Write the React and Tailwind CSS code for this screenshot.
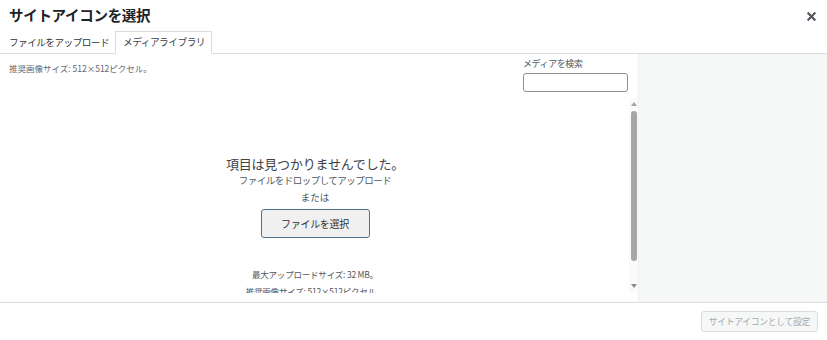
import React from "react";

const font = { fontFamily: '"Noto Sans CJK JP", "Noto Sans", sans-serif' };

function ScrollBar() {
  return (
    <div className="w-[9px] flex flex-col items-center bg-[#fafafa]">
      <div className="h-[6px] mt-[4px] flex items-start justify-center">
        <div className="w-0 h-0 border-l-[3px] border-r-[3px] border-b-[4px] border-l-transparent border-r-transparent border-b-[#a3a3a3]" />
      </div>
      <div className="mt-[3px] w-[6px] h-[150px] rounded-[3px] bg-[#a6a6a6]" />
      <div className="flex-1" />
      <div className="h-[6px] mb-[5px] flex items-end justify-center">
        <div className="w-0 h-0 border-l-[3px] border-r-[3px] border-t-[4px] border-l-transparent border-r-transparent border-t-[#8a8a8a]" />
      </div>
    </div>
  );
}

export default function App() {
  return (
    <div className="w-[827px] h-[340px] bg-white flex flex-col overflow-hidden text-[#3c434a]" style={font}>
      {/* header */}
      <div className="h-[31px] shrink-0 flex items-center justify-between pl-[9px] pr-[11px]">
        <h1 className="text-[14.5px] font-bold text-[#1d2327] leading-none tracking-[-0.3px]">サイトアイコンを選択</h1>
        <svg width="9" height="9" viewBox="0 0 10 10" className="mt-[1px]">
          <path d="M1.5 1.5 L8.5 8.5 M8.5 1.5 L1.5 8.5" stroke="#50575e" strokeWidth="2.4" strokeLinecap="square" />
        </svg>
      </div>
      {/* tabs */}
      <div className="h-[23px] shrink-0 flex items-end border-b border-[#dcdcde] pl-[9px]">
        <div className="h-[22px] flex items-center text-[9.6px] text-[#2c3338] tracking-[-0.5px] pr-[6px]">ファイルをアップロード</div>
        <div className="h-[23px] -mb-px flex items-center pl-[7px] pr-[6px] border border-[#dcdcde] border-b-white bg-white text-[9.7px] text-[#3c434a] tracking-[-0.5px]">メディアライブラリ</div>
      </div>
      {/* main */}
      <div className="flex-1 flex min-h-0">
        <div className="w-[638px] flex flex-col">
          <div className="h-[44px] shrink-0 flex justify-between">
            <div className="pl-[9px] pt-[10px] text-[8.5px] text-[#646970] leading-none">推奨画像サイズ: 512×512ピクセル。</div>
            <div className="pr-[10px] pt-[5px] flex flex-col">
              <label className="text-[9px] text-[#50575e] leading-none mb-[5px] tracking-[-0.4px]">メディアを検索</label>
              <div className="w-[105px] h-[19px] border border-[#8c8f94] rounded-[3px] bg-white" />
            </div>
          </div>
          <div className="flex-1 flex min-h-0">
            <div className="flex-1 flex flex-col items-center overflow-hidden pl-[1px]">
              <div className="shrink-0 mt-[58px] text-[13px] leading-[16px] text-[#3c434a] tracking-[-0.2px]">項目は見つかりませんでした。</div>
              <div className="shrink-0 mt-[1px] text-[9.5px] leading-[14px] text-[#50575e] tracking-[-0.5px]">ファイルをドロップしてアップロード</div>
              <div className="shrink-0 mt-[3px] text-[9.5px] leading-[14px] text-[#50575e]">または</div>
              <button className="shrink-0 mt-[5px] w-[109px] h-[29px] border border-[#50708c] rounded-[3px] bg-[#f0f0f1] text-[10px] text-[#2c3338] tracking-[-0.3px]">ファイルを選択</button>
              <div className="shrink-0 mt-[30px] text-[8.5px] leading-[12px] text-[#50575e] tracking-[-0.2px]">最大アップロードサイズ: 32 MB。</div>
              <div className="shrink-0 mt-[5px] text-[8.5px] leading-[12px] text-[#50575e] tracking-[-0.2px]">推奨画像サイズ: 512×512ピクセル。</div>
            </div>
            <ScrollBar />
          </div>
          <div className="h-[9px] shrink-0" />
        </div>
        <div className="flex-1 bg-[#f6f7f7] border-l border-[#f0f0f1]" />
      </div>
      {/* footer */}
      <div className="h-[38px] shrink-0 border-t border-[#dcdcde] flex items-center justify-end pr-[9px]">
        <button className="h-[21px] px-[7px] border border-[#dcdcde] rounded-[3px] bg-[#f6f7f7] text-[8.8px] text-[#a7aaad] tracking-[-0.3px]">サイトアイコンとして設定</button>
      </div>
    </div>
  );
}
